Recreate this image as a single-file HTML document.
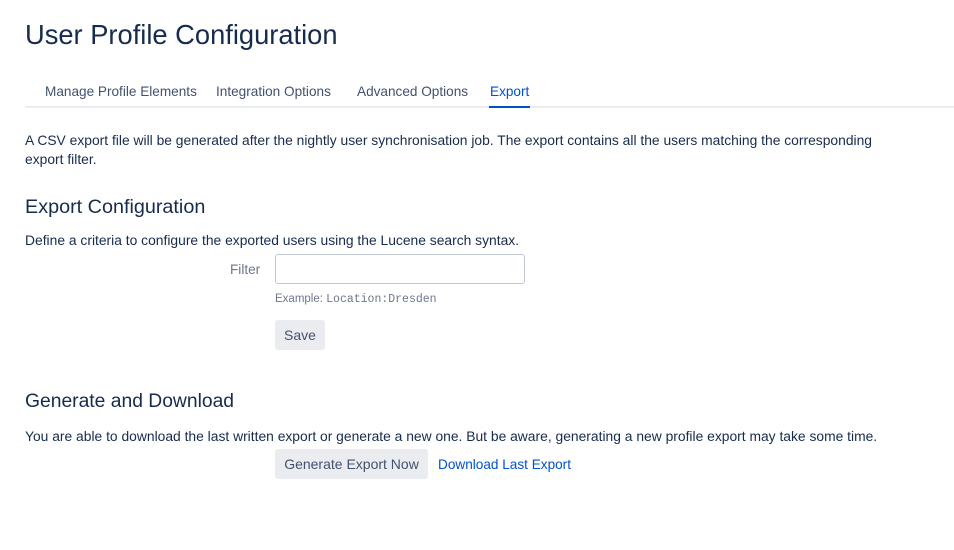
<!DOCTYPE html>
<html><head><meta charset="utf-8"><style>
body{margin:0;width:954px;height:550px;background:#fff;font-family:"Liberation Sans",sans-serif;color:#172b4d;position:relative;overflow:hidden}
.a{position:absolute;white-space:nowrap}
.t{font-size:13.6px;color:#42526e}
.p{font-size:13.85px;color:#172b4d}
h1,h2{margin:0;font-weight:normal}
.btn{position:absolute;background:#ebecf0;border-radius:3px;font-size:14px;color:#42526e;text-align:center}
</style></head><body>
<h1 class="a" style="left:25px;top:19px;font-size:27.3px;color:#172b4d">User Profile Configuration</h1>
<div class="a t" style="left:45px;top:84px">Manage Profile Elements</div>
<div class="a t" style="left:216px;top:84px">Integration Options</div>
<div class="a t" style="left:357px;top:84px">Advanced Options</div>
<div class="a t" style="left:490px;top:84px;color:#0052cc">Export</div>
<div class="a" style="left:25px;top:106px;width:929px;height:2px;background:#ebecf0"></div>
<div class="a" style="left:489px;top:106px;width:41px;height:2px;background:#0052cc"></div>
<div class="a p" style="left:25px;top:131px;line-height:19px">A CSV export file will be generated after the nightly user synchronisation job. The export contains all the users matching the corresponding<br>export filter.</div>
<h2 class="a" style="left:25px;top:196px;font-size:19.8px">Export Configuration</h2>
<div class="a p" style="left:25px;top:232px">Define a criteria to configure the exported users using the Lucene search syntax.</div>
<div class="a t" style="left:230px;top:262px;color:#6b778c">Filter</div>
<div class="a" style="left:275px;top:254px;width:248px;height:28px;border:1px solid #c1c7d0;border-radius:3px"></div>
<div class="a" style="left:275px;top:293px;font-size:11.5px;color:#6b778c">Example: <span style="font-family:'Liberation Mono',monospace">Location:Dresden</span></div>
<div class="btn" style="left:275px;top:320px;width:50px;height:30px;line-height:31px">Save</div>
<h2 class="a" style="left:25px;top:391px;font-size:19.3px">Generate and Download</h2>
<div class="a p" style="left:25px;top:428px">You are able to download the last written export or generate a new one. But be aware, generating a new profile export may take some time.</div>
<div class="btn" style="left:275px;top:449px;width:153px;height:30px;line-height:31px">Generate Export Now</div>
<div class="a t" style="left:438px;top:457px;color:#0052cc">Download Last Export</div>
</body></html>
